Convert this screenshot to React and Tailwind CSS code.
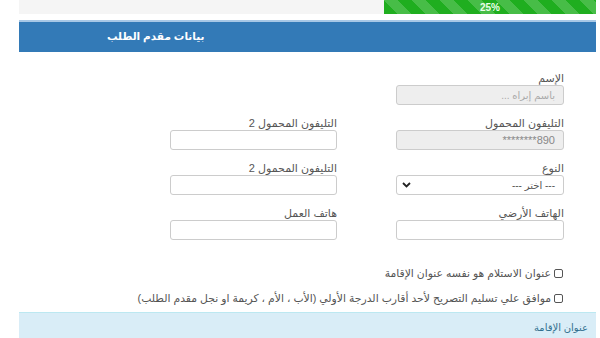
import React from 'react';

const Field = ({ label, children }) => (
    <div className="flex flex-col">
        <label className="h-[13px] text-[11px] leading-[12px] text-[#555]">{label}</label>
        {children}
    </div>
);

const TextBox = ({ disabled, children }) => (
    <div
        className={
            "h-[20px] rounded-[3px] border border-[#ccc] flex items-center px-[8px] text-[10px] " +
            (disabled ? "bg-[#eee] text-[#aaa]" : "bg-white")
        }
    >
        {children}
    </div>
);

const Check = ({ text }) => (
    <label className="flex items-center gap-[3px] h-[14px] text-[10.8px] text-[#555]">
        <input type="checkbox" className="appearance-none w-[9px] h-[9px] border border-[#555] rounded-[2px] bg-white" />
        <span>{text}</span>
    </label>
);

const App = () => {
    return (
        <div dir="rtl" className="w-[600px] h-[338px] overflow-hidden bg-white font-['Liberation_Sans','DejaVu_Sans',sans-serif]">
            <div className="ml-[19px] mr-[4px]">
                <div className="h-[14px] bg-[#f5f5f5] flex">
                    <div className="w-[212px] h-full bg-[#1fae1f] bg-[linear-gradient(45deg,rgba(255,255,255,.18)_25%,transparent_25%,transparent_50%,rgba(255,255,255,.18)_50%,rgba(255,255,255,.18)_75%,transparent_75%,transparent)] bg-size-[28px_28px] flex items-center justify-center text-[#e8ffe8] text-[10px] font-bold">
                        <span dir="ltr">25%</span>
                    </div>
                </div>

                <div className="mt-[6px] h-[32px] bg-[#337ab7] border-t-2 border-[#a8c8e6] flex items-center justify-end pl-[88px]">
                    <span className="text-white text-[10.5px] font-bold">بيانات مقدم الطلب</span>
                </div>

                <div className="pr-[32px] pt-[20px]">
                    <div className="grid grid-cols-[168px_167px] gap-x-[59px] gap-y-[12px]">
                        <Field label="الإسم">
                            <TextBox disabled>باسم إبراه ...</TextBox>
                        </Field>
                        <div />
                        <Field label="التليفون المحمول">
                            <TextBox disabled>
                                <span dir="ltr" className="text-[#888] text-[11px]">********890</span>
                            </TextBox>
                        </Field>
                        <Field label="التليفون المحمول 2">
                            <TextBox />
                        </Field>
                        <Field label="النوع">
                            <div className="h-[20px] rounded-[3px] border border-[#ccc] bg-white flex items-center justify-between pr-[8px] pl-[5px] text-[10px] text-[#555]">
                                <span>--- اختر ---</span>
                                <svg width="9" height="6" viewBox="0 0 9 6" fill="none">
                                    <path d="M1 1l3.5 3.5L8 1" stroke="#222" strokeWidth="1.8" />
                                </svg>
                            </div>
                        </Field>
                        <Field label="التليفون المحمول 2">
                            <TextBox />
                        </Field>
                        <Field label="الهاتف الأرضي">
                            <TextBox />
                        </Field>
                        <Field label="هاتف العمل">
                            <TextBox />
                        </Field>
                    </div>

                    <div className="mt-[26px] flex flex-col gap-[11px] pr-[1px]">
                        <Check text="عنوان الاستلام هو نفسه عنوان الإقامة" />
                        <Check text="موافق علي تسليم التصريح لأحد أقارب الدرجة الأولي (الأب ، الأم ، كريمة او نجل مقدم الطلب)" />
                    </div>
                </div>

                <div className="mt-[7px] h-[34px] bg-[#d9edf7] border-t border-[#bce8f1] flex items-center pr-[8px] pb-[4px]">
                    <span className="text-[10px] text-[#31708f]">عنوان الإقامة</span>
                </div>
            </div>
        </div>
    );
};

export default App;
